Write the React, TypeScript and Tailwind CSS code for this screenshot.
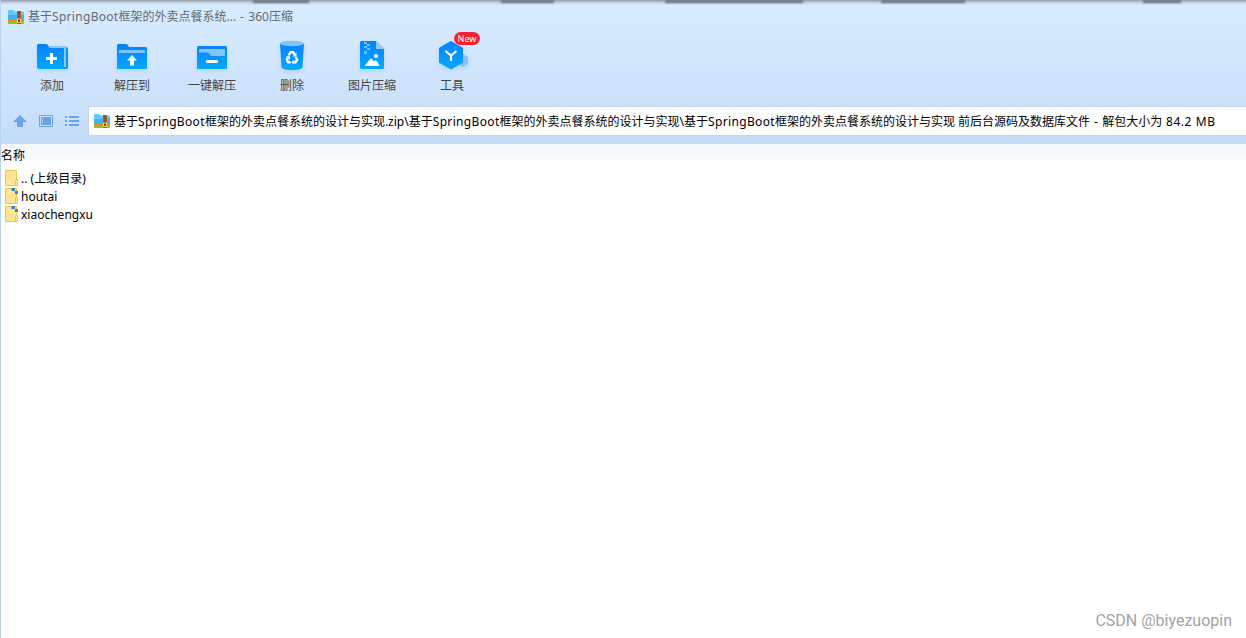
import type { ReactNode } from "react";

function ArchiveIcon() {
  return (
    <svg width="16" height="14" viewBox="0 0 16 14" className="shrink-0">
      <path d="M0 1Q0 0 1 0H5L6.500 1.500H15Q16 1.500 16 2.500V10H0Z" fill="#62caf9" />
      <path d="M0 5H16V10H0Z" fill="#46b0f4" />
      <rect y="10" width="16" height="2" fill="#f58a2c" />
      <path d="M0 12H16V13Q16 14 15 14H1Q0 14 0 13Z" fill="#8bc926" />
      <rect x="9" y="1" width="4" height="13" fill="#b05a1c" />
      <path d="M11 2V9" stroke="#5c2a10" strokeWidth="1" strokeDasharray="1 1" />
      <rect x="9.500" y="9" width="3" height="3.500" fill="#7b3b12" stroke="#ffd75a" />
    </svg>
  );
}

function Gradient({ id }: { id: string }) {
  return (
    <defs>
      <linearGradient id={id} x1="0" y1="0" x2="0" y2="1">
        <stop offset="0" stopColor="#0681ff" />
        <stop offset="1" stopColor="#03a8fe" />
      </linearGradient>
    </defs>
  );
}

function AddIcon() {
  return (
    <svg width="36" height="36" viewBox="0 0 36 36">
      <Gradient id="add" />
      <path d="M14 8H31.500Q34 8 34 10.500V28.500Q34 30 32 30H14Z" fill="#0794fe" />
      <path d="M15 7H30Q32 7 32 9V28H30V9H15Z" fill="#8cc8ff" />
      <path d="M3 6.500Q3 5 4.500 5H12Q13 5 13.600 5.800L15.500 9H28Q30 9 30 11V30H5Q3 30 3 28Z" fill="url(#add)" />
      <path d="M12 19.500H23M17.500 14V25" stroke="#fff" strokeWidth="3" />
    </svg>
  );
}

function ExtractIcon() {
  return (
    <svg width="36" height="36" viewBox="0 0 36 36">
      <Gradient id="extract" />
      <path d="M3 6.500Q3 5 4.500 5H12Q13 5 13.600 5.800L15 8H31.500Q33 8 33 9.500V28.500Q33 30 31.500 30H4.500Q3 30 3 28.500Z" fill="url(#extract)" />
      <path d="M5 14V12Q5 11 6 11H30Q31 11 31 12V14Z" fill="#84c5ff" />
      <path d="M18 16L23 21.500H20V26.500H16V21.500H13Z" fill="#fff" />
    </svg>
  );
}

function OneKeyIcon() {
  return (
    <svg width="36" height="36" viewBox="0 0 36 36">
      <Gradient id="onekey" />
      <rect x="3" y="7" width="30" height="23" rx="1.500" fill="url(#onekey)" />
      <path d="M5 13.500V11Q5 10 6 10H30Q31 10 31 11V17H17.500Q16.500 17 16 16.200L15 14.500Q14.500 13.500 13.500 13.500Z" fill="#84c5ff" />
      <rect x="12" y="21" width="12" height="3" rx="1" fill="#fff" />
    </svg>
  );
}

function DeleteIcon() {
  return (
    <svg width="36" height="36" viewBox="0 0 36 36">
      <Gradient id="delete" />
      <path d="M6 4.500H30L28.500 28Q28.300 31 18 31Q7.700 31 7.500 28Z" fill="url(#delete)" />
      <ellipse cx="18" cy="4.500" rx="12" ry="2.800" fill="#7fc3fb" />
      <g fill="none" stroke="#fff" strokeWidth="2.400">
        <path d="M14.600 16.300L16.600 13.200H19.200L20.700 15.600" />
        <path d="M21.800 18L23.200 20.600L21.500 23.200H19" />
        <path d="M16.600 23.200H14.200L12.800 20.600L13.800 18.800" />
      </g>
      <path d="M22.500 13.500V17.500H18.700ZM19.600 20.700V25.700L17.300 23.200ZM11.800 17.200H16V20.800Z" fill="#fff" />
    </svg>
  );
}

function PictureIcon() {
  return (
    <svg width="36" height="36" viewBox="0 0 36 36">
      <Gradient id="picture" />
      <path d="M7.500 2H22L30 10V28.500Q30 30 28.500 30H7.500Q6 30 6 28.500V3.500Q6 2 7.500 2Z" fill="url(#picture)" />
      <path d="M22 2L30 10H22Z" fill="#90cbff" />
      <path d="M10 3H13V5H10ZM13 5H16V7H13ZM10 7H13V9H10ZM13 9H16V11H13ZM10 12H13V15H10Z" fill="#75beff" />
      <circle cx="22" cy="17" r="2" fill="#fff" />
      <path d="M11 26.500L16 20Q17 18.800 18 20L20 22.500L21.200 21.500Q22 21 22.700 22L25.300 26Q25.500 27 24.500 27H11.500Q10.500 27 11 26.500Z" fill="#fff" />
    </svg>
  );
}

function ToolsIcon() {
  return (
    <svg width="36" height="36" viewBox="0 0 36 36">
      <Gradient id="tools" />
      <path d="M29 15L34 18V25L28.500 28L23 25V18Z" fill="#85c4fb" />
      <path d="M17 2.500L28.500 9V23.500L17 30L5.500 23.500V9Z" fill="url(#tools)" stroke="url(#tools)" strokeLinejoin="round" />
      <path d="M11.500 12L17 16.500L22.500 12M17 16V22" fill="none" stroke="#fff" strokeWidth="2.200" />
    </svg>
  );
}

function ToolButton({ label, badge, children }: { label: string; badge?: string; children: ReactNode }) {
  return (
    <div className="relative flex w-20 flex-col items-center">
      <div className="h-9 drop-shadow-[0_2px_2px_rgba(60,140,220,0.2)]">{children}</div>
      <span className="mt-[3px] text-xs leading-4 text-[#404448]">{label}</span>
      {badge && (
        <span className="absolute top-[-7px] left-[42px] h-[13px] w-[26px] rounded-full bg-[#f6232f] text-center text-[9px] leading-[13px] text-white">
          {badge}
        </span>
      )}
    </div>
  );
}

function FolderName() {
  return (
    <>
      基于<span className="tracking-[0.34px]">SpringBoot</span>框架的外卖点餐系统的设计与实现
    </>
  );
}

function FileRow({ name, marked }: { name: string; marked?: boolean }) {
  return (
    <li className="flex h-[18px] items-center">
      <svg width="16" height="18" viewBox="0 0 16 18" className="shrink-0">
        <path d="M.5 .5H11.500V9.500H12.500V15.500H.5Z" fill="#ffe494" stroke="#efc744" />
        <path d="M10.500 15V9.500" stroke="#efc744" />
        {marked && <path d="M6.500 0H10V3H6.500ZM10 3H13V6H10Z" fill="#2e86c8" />}
      </svg>
      <span className="leading-[18px] whitespace-pre">{name}</span>
    </li>
  );
}

// dark patches of the window behind, seen along the top edge
function TopShadow() {
  return (
    <div className="pointer-events-none absolute inset-x-0 top-0 flex h-[5px] bg-linear-to-b from-[#929ca8] via-[#c3d0de] to-transparent">
      <div className="ml-[252px] h-[3px] w-[56px] bg-[#66717e] blur-[1px]" />
      <div className="ml-[192px] h-[3px] w-[53px] bg-[#66717e] blur-[1px]" />
      <div className="ml-[111px] h-[3px] w-[138px] bg-[#66717e] blur-[1px]" />
      <div className="ml-[78px] h-[3px] w-[84px] bg-[#66717e] blur-[1px]" />
      <div className="ml-[178px] h-[3px] w-[38px] bg-[#66717e] blur-[1px]" />
    </div>
  );
}

export default function App() {
  return (
    <div className="relative flex h-[638px] w-[1246px] flex-col overflow-hidden border-l border-[#b6d3f2] bg-white font-['Noto_Sans','Noto_Sans_CJK_SC',sans-serif] text-xs text-black">
      <header className="flex h-[144px] flex-col bg-linear-to-b from-[#d9ecff] via-[#d0e5fc] to-[#c3ddf8]">
        <div className="flex h-[33px] items-center gap-1 pl-[7px] text-[#606a75]">
          <ArchiveIcon />
          <span className="pt-px whitespace-nowrap">
            基于<span className="tracking-[0.3px]">SpringBoot</span>框架的外卖点餐系统...
            <span className="tracking-[0.7px]"> - </span>360压缩
          </span>
        </div>
        <nav className="flex h-[74px] pt-[6px] pl-[11px]">
          <ToolButton label="添加">
            <AddIcon />
          </ToolButton>
          <ToolButton label="解压到">
            <ExtractIcon />
          </ToolButton>
          <ToolButton label="一键解压">
            <OneKeyIcon />
          </ToolButton>
          <ToolButton label="删除">
            <DeleteIcon />
          </ToolButton>
          <ToolButton label="图片压缩">
            <PictureIcon />
          </ToolButton>
          <ToolButton label="工具" badge="New">
            <ToolsIcon />
          </ToolButton>
        </nav>
        <div className="flex h-7 items-center">
          <div className="flex w-[88px] shrink-0 items-center gap-3 pl-3">
            <svg width="14" height="14" viewBox="0 0 14 14" fill="#6ba2ee">
              <path d="M7 1L14 8H10V13H4V8H0Z" />
            </svg>
            <svg width="14" height="14" viewBox="0 0 14 14" fill="#6ba2ee">
              <path d="M.5 1.500H13.500V12.500H.5Z" fill="none" stroke="#6ba2ee" />
              <path d="M2 3H12V11H2ZM3 4V5H4V4ZM3 6V7H4V6ZM3 8V9H4V8Z" fillRule="evenodd" />
            </svg>
            <svg width="14" height="14" viewBox="0 0 14 14" fill="#6ba2ee">
              <path d="M0 2H2V4H0ZM4 2H14V4H4ZM0 6H2V8H0ZM4 6H14V8H4ZM0 10H2V12H0ZM4 10H14V12H4Z" />
            </svg>
          </div>
          <div className="flex h-7 grow items-center gap-1 bg-white pl-[5px] shadow-[0_0_0_1px_#bcd8f3]">
            <ArchiveIcon />
            <span className="pt-[2px] whitespace-nowrap">
              <FolderName />
              .zip\
              <FolderName />\
              <FolderName /> 前后台源码及数据库文件
              <span className="tracking-[0.7px]"> - </span>解包大小为
              <span className="tracking-[0.55px]"> 84.2 MB</span>
            </span>
          </div>
        </div>
      </header>
      <main className="grow">
        <div className="flex h-6 items-center bg-linear-to-b from-[#f2f8fe] to-white">名称</div>
        <ul className="pt-[2px] pl-1">
          <FileRow name=".. (上级目录)" />
          <FileRow name="houtai" marked />
          <FileRow name="xiaochengxu" marked />
        </ul>
      </main>
      <footer className="flex justify-end pr-[14px] pb-[5px] font-['Roboto',sans-serif] text-base leading-6 text-[#a3a3a3]">
        CSDN @biyezuopin
      </footer>
      <TopShadow />
    </div>
  );
}
